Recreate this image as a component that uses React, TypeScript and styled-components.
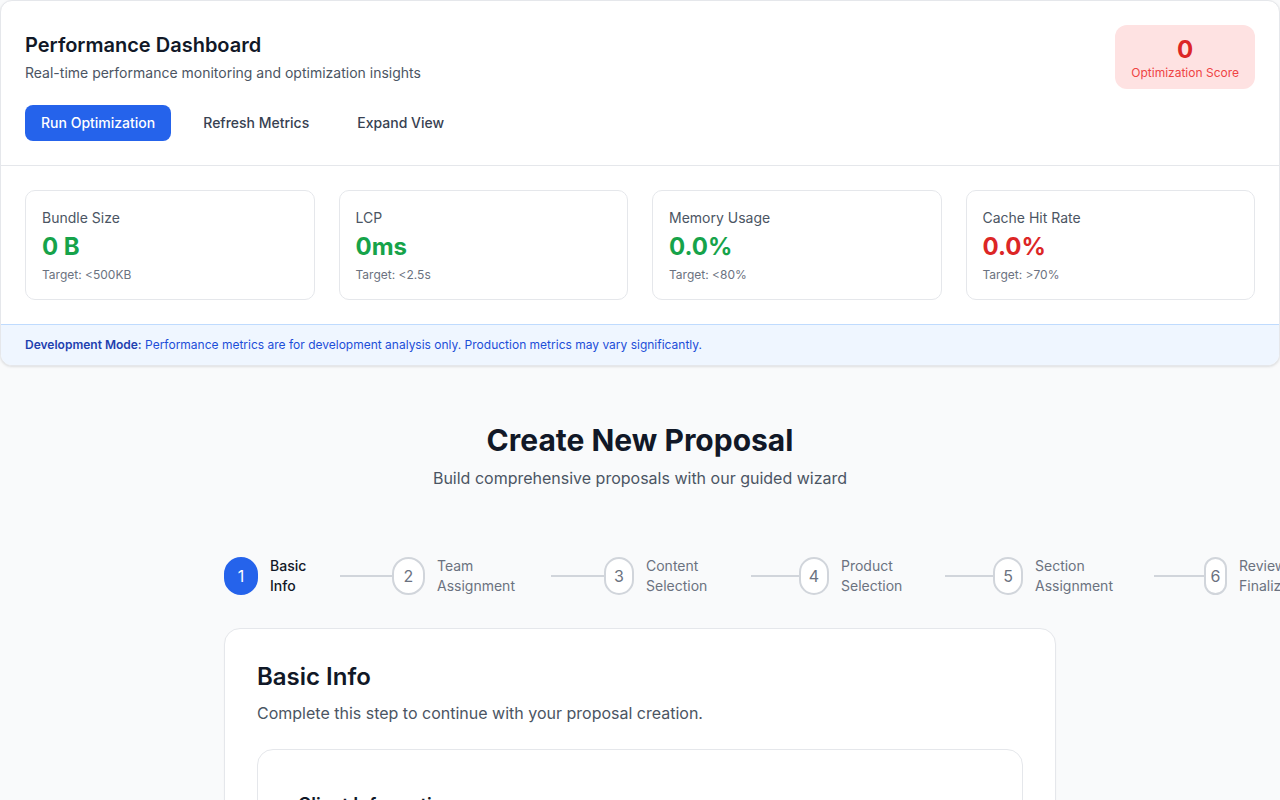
import React from "react";
import styled, { createGlobalStyle } from "styled-components";

const GlobalStyle = createGlobalStyle`
  html, body {
    margin: 0;
    padding: 0;
    background: #f9fafb;
    font-family: Inter, "Noto Sans", "Liberation Sans", sans-serif;
    color: #111827;
    -webkit-font-smoothing: antialiased;
  }
  body { overflow-x: hidden; }
  * { box-sizing: border-box; }
`;

const Page = styled.div`
  min-height: 100vh;
  background: #f9fafb;
  padding-bottom: 80px;
`;

const Panel = styled.section`
  background: #ffffff;
  border: 1px solid #e5e7eb;
  border-radius: 12px;
  overflow: hidden;
  box-shadow: 0 1px 3px rgba(0, 0, 0, 0.08), 0 1px 2px rgba(0, 0, 0, 0.04);
`;

const PanelHeader = styled.div`
  display: flex;
  justify-content: space-between;
  align-items: flex-start;
  padding: 24px;
`;

const HeaderText = styled.div`
  display: flex;
  flex-direction: column;
`;

const PanelTitle = styled.h2`
  margin: 6px 0 0;
  font-size: 20px;
  line-height: 28px;
  font-weight: 600;
  color: #111827;
`;

const PanelSubtitle = styled.p`
  margin: 4px 0 0;
  font-size: 14px;
  line-height: 20px;
  color: #4b5563;
`;

const ButtonRow = styled.div`
  display: flex;
  gap: 16px;
  margin-top: 22px;
`;

const ActionButton = styled.button<{ $primary?: boolean }>`
  height: 36px;
  padding: 0 16px;
  border: none;
  border-radius: 8px;
  font-family: inherit;
  font-size: 14px;
  font-weight: 500;
  line-height: 20px;
  cursor: pointer;
  background: ${(p) => (p.$primary ? "#2563eb" : "transparent")};
  color: ${(p) => (p.$primary ? "#ffffff" : "#374151")};
`;

const ScoreBox = styled.div`
  background: #fee2e2;
  border-radius: 12px;
  padding: 9px 16px 8px;
  text-align: center;
`;

const ScoreValue = styled.div`
  font-size: 24px;
  line-height: 31px;
  font-weight: 700;
  color: #dc2626;
`;

const ScoreLabel = styled.div`
  font-size: 12px;
  line-height: 16px;
  color: #ef4444;
`;

const MetricsGrid = styled.div`
  display: grid;
  grid-template-columns: repeat(4, 1fr);
  gap: 24px;
  padding: 24px;
  border-top: 1px solid #e5e7eb;
`;

const MetricCard = styled.div`
  border: 1px solid #e5e7eb;
  border-radius: 10px;
  padding: 17px 16px 16px;
  background: #ffffff;
`;

const MetricLabel = styled.div`
  font-size: 14px;
  line-height: 20px;
  color: #4b5563;
`;

const MetricValue = styled.div<{ $bad?: boolean }>`
  margin-top: 3px;
  font-size: 24px;
  line-height: 32px;
  font-weight: 700;
  color: ${(p) => (p.$bad ? "#dc2626" : "#16a34a")};
`;

const MetricTarget = styled.div`
  margin-top: 4px;
  font-size: 12px;
  line-height: 16px;
  color: #6b7280;
`;

const Banner = styled.div`
  background: #eff6ff;
  border-top: 1px solid #bfdbfe;
  padding: 12px 24px;
  font-size: 12px;
  line-height: 16px;
  color: #1d4ed8;
`;

const BannerStrong = styled.strong`
  font-weight: 600;
  color: #1e40af;
`;

const Main = styled.main`
  width: 832px;
  margin: 0 auto;
  padding-top: 56px;
`;

const Hero = styled.div`
  text-align: center;
`;

const HeroTitle = styled.h1`
  margin: 0;
  font-size: 30px;
  line-height: 36px;
  font-weight: 700;
  color: #111827;
`;

const HeroSubtitle = styled.p`
  margin: 8px 0 0;
  font-size: 16px;
  line-height: 24px;
  color: #4b5563;
`;

const Stepper = styled.div`
  display: flex;
  align-items: center;
  height: 40px;
  margin: 66px 0 32px;
`;

const Step = styled.div`
  display: flex;
  align-items: center;
  flex-shrink: 0;
`;

const StepCircle = styled.div<{ $active?: boolean; $w: number }>`
  width: ${(p) => p.$w}px;
  height: 38px;
  flex-shrink: 0;
  border-radius: 9999px;
  border: 2px solid ${(p) => (p.$active ? "#2563eb" : "#d1d5db")};
  background: ${(p) => (p.$active ? "#2563eb" : "#ffffff")};
  color: ${(p) => (p.$active ? "#ffffff" : "#6b7280")};
  display: flex;
  align-items: center;
  justify-content: center;
  font-size: 16px;
  line-height: 24px;
`;

const StepLabel = styled.div<{ $active?: boolean; $w: number }>`
  width: ${(p) => p.$w}px;
  margin-left: 12px;
  font-size: 14px;
  line-height: 20px;
  font-weight: ${(p) => (p.$active ? 500 : 400)};
  color: ${(p) => (p.$active ? "#111827" : "#6b7280")};
  flex-shrink: 0;
`;

const Connector = styled.div<{ $w: number }>`
  width: ${(p) => p.$w}px;
  height: 2px;
  margin-left: 16px;
  background: #d1d5db;
  flex-shrink: 0;
`;

const StepCard = styled.div`
  background: #ffffff;
  border: 1px solid #e5e7eb;
  border-radius: 16px;
  padding: 32px;
  box-shadow: 0 1px 2px rgba(0, 0, 0, 0.03);
`;

const CardTitle = styled.h2`
  margin: 0;
  font-size: 24px;
  line-height: 32px;
  font-weight: 600;
  color: #111827;
`;

const CardSubtitle = styled.p`
  margin: 8px 0 24px;
  font-size: 16px;
  line-height: 24px;
  color: #4b5563;
`;

const InnerCard = styled.div`
  border: 1px solid #e5e7eb;
  border-radius: 16px;
  padding: 41px 40px 40px;
  background: #ffffff;
`;

const SectionTitle = styled.h3`
  margin: 0 0 16px;
  font-size: 18px;
  line-height: 28px;
  font-weight: 600;
  color: #111827;
`;

const FieldGrid = styled.div`
  display: grid;
  grid-template-columns: 1fr 1fr;
  gap: 16px;
`;

const Field = styled.label`
  display: flex;
  flex-direction: column;
  gap: 6px;
  font-size: 14px;
  font-weight: 500;
  color: #374151;
`;

const Input = styled.input`
  height: 40px;
  border: 1px solid #d1d5db;
  border-radius: 8px;
  padding: 0 12px;
  font-family: inherit;
  font-size: 14px;
`;

const metrics = [
  { label: "Bundle Size", value: "0 B", target: "Target: <500KB", bad: false },
  { label: "LCP", value: "0ms", target: "Target: <2.5s", bad: false },
  { label: "Memory Usage", value: "0.0%", target: "Target: <80%", bad: false },
  { label: "Cache Hit Rate", value: "0.0%", target: "Target: >70%", bad: true },
];

const steps = [
  { n: 1, label: "Basic Info", circle: 34, labelW: 54, line: 52, active: true },
  { n: 2, label: "Team Assignment", circle: 33, labelW: 98, line: 53 },
  { n: 3, label: "Content Selection", circle: 30, labelW: 89, line: 48 },
  { n: 4, label: "Product Selection", circle: 30, labelW: 88, line: 48 },
  { n: 5, label: "Section Assignment", circle: 30, labelW: 103, line: 50 },
  { n: 6, label: "Review & Finalize", circle: 23, labelW: 70, line: 0 },
];

export default function App() {
  return (
    <>
      <GlobalStyle />
      <Page>
        <Panel>
          <PanelHeader>
            <HeaderText>
              <PanelTitle>Performance Dashboard</PanelTitle>
              <PanelSubtitle>Real-time performance monitoring and optimization insights</PanelSubtitle>
              <ButtonRow>
                <ActionButton $primary>Run Optimization</ActionButton>
                <ActionButton>Refresh Metrics</ActionButton>
                <ActionButton>Expand View</ActionButton>
              </ButtonRow>
            </HeaderText>
            <ScoreBox>
              <ScoreValue>0</ScoreValue>
              <ScoreLabel>Optimization Score</ScoreLabel>
            </ScoreBox>
          </PanelHeader>
          <MetricsGrid>
            {metrics.map((m) => (
              <MetricCard key={m.label}>
                <MetricLabel>{m.label}</MetricLabel>
                <MetricValue $bad={m.bad}>{m.value}</MetricValue>
                <MetricTarget>{m.target}</MetricTarget>
              </MetricCard>
            ))}
          </MetricsGrid>
          <Banner>
            <BannerStrong>Development Mode:</BannerStrong> Performance metrics are for development analysis only.
            Production metrics may vary significantly.
          </Banner>
        </Panel>

        <Main>
          <Hero>
            <HeroTitle>Create New Proposal</HeroTitle>
            <HeroSubtitle>Build comprehensive proposals with our guided wizard</HeroSubtitle>
          </Hero>

          <Stepper>
            {steps.map((s) => (
              <Step key={s.n}>
                <StepCircle $active={s.active} $w={s.circle}>
                  {s.n}
                </StepCircle>
                <StepLabel $active={s.active} $w={s.labelW}>
                  {s.label}
                </StepLabel>
                {s.line > 0 && <Connector $w={s.line} />}
              </Step>
            ))}
          </Stepper>

          <StepCard>
            <CardTitle>Basic Info</CardTitle>
            <CardSubtitle>Complete this step to continue with your proposal creation.</CardSubtitle>
            <InnerCard>
              <SectionTitle>Client Information</SectionTitle>
              <FieldGrid>
                <Field>
                  Client Name
                  <Input placeholder="Enter client name" />
                </Field>
                <Field>
                  Contact Email
                  <Input placeholder="client@example.com" />
                </Field>
              </FieldGrid>
            </InnerCard>
          </StepCard>
        </Main>
      </Page>
    </>
  );
}
